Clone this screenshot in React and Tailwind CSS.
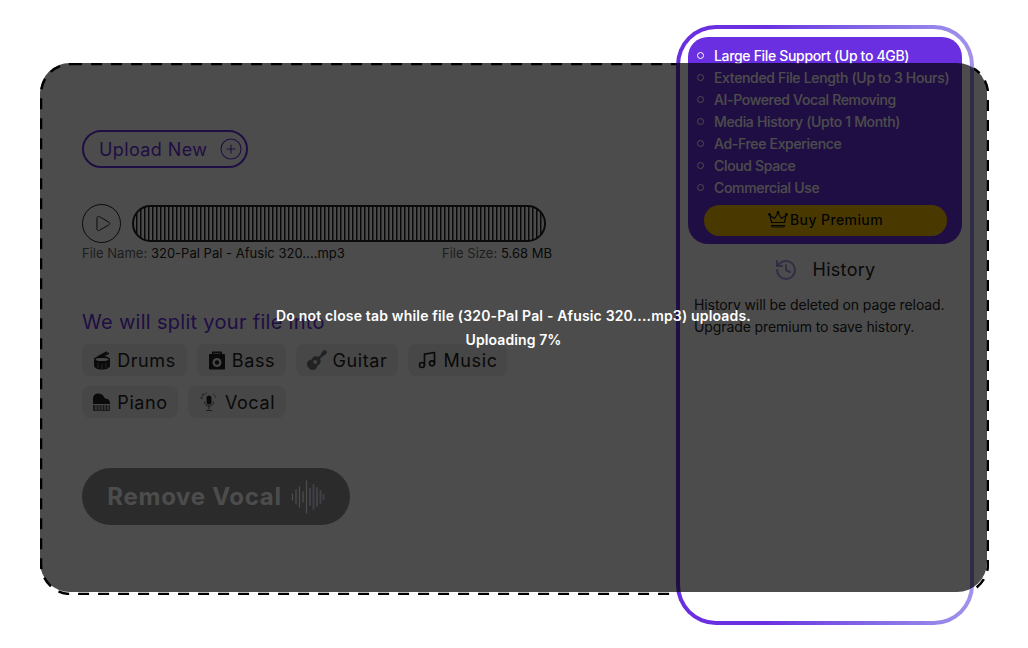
import React from 'react';
import { CirclePlus, Play, History, Music } from 'lucide-react';
import { FaGuitar } from 'react-icons/fa';

const premiumFeatures = [
  'Large File Support (Up to 4GB)',
  'Extended File Length (Up to 3 Hours)',
  'AI-Powered Vocal Removing',
  'Media History (Upto 1 Month)',
  'Ad-Free Experience',
  'Cloud Space',
  'Commercial Use',
];

const DrumIcon = () => (
  <svg width="18" height="19" viewBox="0 0 18 19" fill="currentColor">
    <path d="M1 8.500c0-2 3.500-3.500 8-3.500s8 1.500 8 3.500v6c0 2.500-3.500 4-8 4s-8-1.500-8-4z" />
    <path d="M4.500 6 14 1M9 5.500l7-3.500" stroke="currentColor" strokeWidth="1.500" />
    <ellipse cx="9" cy="8.500" rx="6.500" ry="1.600" fill="#eeeeee" />
    <path d="M5 12v5M9 13v5M13 12v5" stroke="#eeeeee" strokeWidth=".8" opacity=".6" />
  </svg>
);

const AmpIcon = () => (
  <svg width="18" height="19" viewBox="0 0 18 19" fill="currentColor">
    <path d="M4 3V1.500C4 .8 4.500.5 5 .5h8c.6 0 1 .4 1 1V3h2c.6 0 1 .5 1 1v13.500c0 .6-.5 1-1 1H2c-.6 0-1-.4-1-1V4c0-.5.4-1 1-1z" />
    <path d="M5.500 1.800h7V3h-7z" fill="#eeeeee" opacity=".5" />
    <circle cx="9" cy="11.500" r="4.500" fill="#eeeeee" />
    <circle cx="9" cy="11.500" r="2.200" />
  </svg>
);

const PianoIcon = () => (
  <svg width="19" height="19" viewBox="0 0 19 19" fill="currentColor">
    <path d="M1 11V6c0-3.500 2-5.500 5-5.500s5 1.500 6 3.500c.7 1.500 2 1.500 3.500 2 1.500.5 2.500 2 2.500 5z" />
    <path d="M1 12h17v6H1z" opacity=".7" />
    <path d="M4 12v5M7 12v5M10 12v5M13 12v5M16 12v5" stroke="#eeeeee" strokeWidth="1" />
  </svg>
);

const VocalIcon = () => (
  <svg width="20" height="20" viewBox="0 0 20 20" fill="none">
    <path d="M4 7 1.500 6 4 4.500 3 2l3 .500L7.500.500M14 2c1.500 1 2.500 2.500 3 4" stroke="currentColor" strokeWidth="1" opacity=".5" />
    <rect x="7.500" y="3.500" width="5" height="9" rx="2.500" fill="currentColor" />
    <path d="M5.500 9.500c0 3 2 4.500 4.500 4.500s4.500-1.500 4.500-4.500M10 14v3.500M7 18.500h6" stroke="currentColor" strokeWidth="1" opacity=".7" />
  </svg>
);

const CrownIcon = () => (
  <svg width="20" height="17" viewBox="0 0 20 17" fill="none" stroke="currentColor" strokeWidth="1.200">
    <path d="M3.500 11.500 2 4.500l4.500 3L10 2l3.500 5.500 4.500-3-1.500 7z" strokeLinejoin="round" />
    <path d="M3.500 14.500c0 1 .5 1.500 1.500 1.500h10c1 0 1.500-.5 1.500-1.500z" />
    <circle cx="10" cy="1.500" r=".8" fill="currentColor" />
    <circle cx="1.500" cy="3.500" r=".8" fill="currentColor" />
    <circle cx="18.500" cy="3.500" r=".8" fill="currentColor" />
  </svg>
);

const SoundWaveIcon = () => (
  <svg width="34" height="34" viewBox="0 0 34 34" fill="none" strokeLinecap="round">
    <g stroke="#ffffff" strokeWidth="1.300">
      <path d="M1.500 14v6M5 10v14M8.500 7v20M12 12v10M15.500 1v32" />
    </g>
    <g stroke="#d6d6ee" strokeWidth="2">
      <path d="M19 9v16M22.500 5v24M26 8v18M29.500 11v12M32.500 15v4" />
    </g>
  </svg>
);

const splitTargets = [
  [
    { label: 'Drums', icon: <DrumIcon />, width: 'w-[105px]' },
    { label: 'Bass', icon: <AmpIcon />, width: 'w-[89px]' },
    { label: 'Guitar', icon: <FaGuitar size={20} className="opacity-60" />, width: 'w-[102px]' },
    { label: 'Music', icon: <Music size={20} strokeWidth={2} />, width: 'w-[99px]' },
  ],
  [
    { label: 'Piano', icon: <PianoIcon />, width: 'w-[96px]' },
    { label: 'Vocal', icon: <VocalIcon />, width: 'w-[98px]' },
  ],
];

const Chip = ({ label, icon, width }) => (
  <div className={`${width} h-8 rounded-lg bg-[#eeeeee] flex items-center justify-center gap-[6px] text-[18px] text-[#222222] tracking-[0.6px]`}>
    {icon}
    <span>{label}</span>
  </div>
);

const App = () => {
  return (
    <div className="min-h-[648px] bg-white pt-[63px] pl-10 font-['Inter','Liberation_Sans',sans-serif] overflow-hidden">
      {/* Zone de depot */}
      <div className="relative w-[949px] h-[532px] flex justify-between">
        {/* Bordure pointillee */}
        <svg className="absolute inset-0 w-full h-full" viewBox="0 0 949 532" fill="none">
          <rect x="1" y="1" width="947" height="530" rx="30" stroke="#000000" strokeWidth="2.500" strokeDasharray="11 9" />
        </svg>

        {/* Colonne gauche */}
        <div className="pl-[42px] pt-[67px] flex flex-col items-start">
          <button className="w-[166px] h-[38px] pl-[15px] rounded-full border-2 border-[#6a2fe0] flex items-center gap-[12px] text-[18px] text-[#6a2fe0] tracking-[0.4px]">
            Upload New
            <CirclePlus size={24} strokeWidth={1.1} />
          </button>

          <div className="mt-9 flex items-center gap-[11px]">
            <div className="w-[39px] h-[39px] rounded-full border-[1.5px] border-[#222222] flex items-center justify-center">
              <Play size={19} strokeWidth={1.25} className="text-[#222222] ml-[2px]" />
            </div>
            <svg width="414" height="37" viewBox="0 0 414 37" className="block">
              <defs>
                <pattern id="stripes" width="4" height="37" patternUnits="userSpaceOnUse">
                  <rect x="0" width="1.500" height="37" fill="#222222" />
                </pattern>
              </defs>
              <rect x="1" y="1" width="412" height="35" rx="17.500" fill="url(#stripes)" stroke="#222222" strokeWidth="2" />
            </svg>
          </div>

          <div className="w-[470px] flex justify-between text-[13px] leading-5 text-[#222222] tracking-[0.02px]">
            <span><span className="text-[#666666]">File Name:</span> 320-Pal Pal - Afusic 320....mp3</span>
            <span><span className="text-[#666666]">File Size:</span> 5.68 MB</span>
          </div>

          <h2 className="mt-[45px] text-[20px] leading-7 text-[#6a2fe0] tracking-[0.3px]">We will split your file into</h2>

          <div className="mt-2 flex flex-col gap-[10px]">
            {splitTargets.map((row, i) => (
              <div key={i} className="flex gap-[10px]">
                {row.map((item) => (
                  <Chip key={item.label} {...item} />
                ))}
              </div>
            ))}
          </div>

          <button className="mt-[50px] w-[268px] h-[57px] rounded-full bg-[#8f8f8f] flex items-center justify-center gap-[9px] text-[24px] font-bold text-white tracking-[0.7px]">
            Remove Vocal
            <SoundWaveIcon />
          </button>
        </div>

        {/* Panneau lateral */}
        <aside className="relative mr-[15px] -mt-[38px] w-[298px] h-[600px] shrink-0 rounded-[40px] p-1 bg-gradient-to-r from-[#6a2fe0] from-30% to-[#a193ea]">
          <div className="h-full rounded-[36px] bg-white px-2 pt-2">
            <div className="h-[207px] rounded-[20px] bg-[#6a2fe0] pt-[7px] pl-[9px]">
              <ul>
                {premiumFeatures.map((feature) => (
                  <li key={feature} className="h-[22px] flex items-center gap-[10px] text-[14px] font-medium text-white tracking-[-0.33px] whitespace-nowrap">
                    <span className="w-[7px] h-[7px] shrink-0 rounded-full border border-white" />
                    {feature}
                  </li>
                ))}
              </ul>
              <button className="mt-[7px] ml-[7px] w-[243px] h-[31px] pb-[2px] rounded-full bg-[#f5c000] flex items-center justify-center gap-[2px] text-[14px] font-medium text-[#111111] tracking-[0.4px]">
                <CrownIcon />
                Buy Premium
              </button>
            </div>

            <div className="mt-[12px] flex items-center justify-center gap-[14px] text-[18px] text-[#222222] tracking-[0.3px]">
              <History size={24} strokeWidth={2} className="text-[#a099e8]" />
              History
            </div>

            <p className="mt-[11px] px-[6px] text-[14px] leading-[22px] text-[#222222] tracking-[-0.1px] whitespace-nowrap">
              History will be deleted on page reload.<br />
              Upgrade premium to save history.
            </p>
          </div>
        </aside>

        {/* Voile de chargement */}
        <div className="absolute left-0 right-[2px] top-0 bottom-[3px] rounded-[30px] bg-black/70 flex flex-col items-center justify-center text-[14px] font-semibold leading-6 text-white whitespace-nowrap">
          <p className="tracking-[0.17px]">Do not close tab while file (320-Pal Pal - Afusic 320....mp3) uploads.</p>
          <p className="tracking-[0.1px]">Uploading 7%</p>
        </div>
      </div>
    </div>
  );
};

export default App;
